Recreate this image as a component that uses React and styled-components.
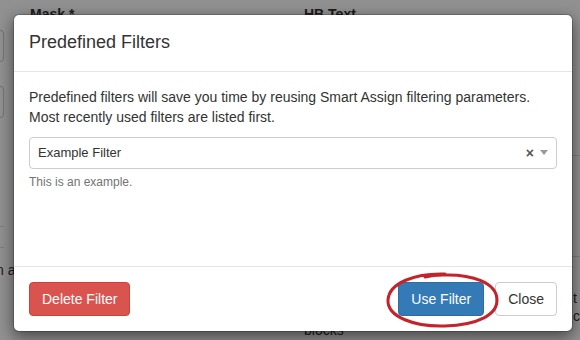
import React from 'react'
import styled, {createGlobalStyle} from 'styled-components'

const GlobalStyle = createGlobalStyle`
html, body {
    margin: 0;
    padding: 0;
    width: 580px;
    height: 340px;
    overflow: hidden;
    background: #fff;
    font-family: "Liberation Sans", Arial, sans-serif;
    font-size: 14px;
    color: #333;
}
*{
    box-sizing: border-box;
}
`

function App() {
  return (
    <Screen>
        <GlobalStyle />
        <Page>
            <EdgeCol>
                <EdgeInput top={30} />
                <EdgeInput top={24} />
                <EdgeRule top={108} />
                <EdgeRule top={20} />
                <EdgeText>n a</EdgeText>
            </EdgeCol>
            <FormCol>
                <Label>Mask *</Label>
            </FormCol>
            <FormCol>
                <Label>HB Text</Label>
                <Spacer />
                <Label plain>blocks</Label>
            </FormCol>
            <RightCol>
                <EdgeRule top={155} />
                <EdgeRule top={100} />
                <RightText top={32}>t</RightText>
                <RightText top={0}>c</RightText>
            </RightCol>
        </Page>
        <Backdrop />
        <Modal>
            <Header>
                <Title>Predefined Filters</Title>
            </Header>
            <Body>
                <Intro>
                    Predefined filters will save you time by reusing Smart Assign filtering parameters.
                    <br />Most recently used filters are listed first.
                </Intro>
                <Select>
                    <SelectValue>Example Filter</SelectValue>
                    <ClearMark>×</ClearMark>
                    <Caret />
                </Select>
                <Help>This is an example.</Help>
            </Body>
            <Footer>
                <Button kind="danger">Delete Filter</Button>
                <FooterRight>
                    <Circled>
                        <Button kind="primary">Use Filter</Button>
                        <Ring viewBox="0 0 116 58" width="116" height="58">
                            <path d="M60 3 C 30 2, 4 12, 3 29 C 2 46, 30 56, 60 55 C 92 54, 113 44, 112 28 C 111 12, 88 3, 58 4 C 50 4, 44 5, 40 6"
                                fill="none" stroke="#c4232b" strokeWidth="3" strokeLinecap="round" />
                        </Ring>
                    </Circled>
                    <Button>Close</Button>
                </FooterRight>
            </Footer>
        </Modal>
    </Screen>
  )
}
export default App

const Screen = styled.div`
position: relative;
width: 580px;
height: 340px;
overflow: hidden;
`
const Page = styled.div`
display: grid;
grid-template-columns: 4px 274px 250px 52px;
height: 340px;
`
const EdgeCol = styled.div`
display: flex;
flex-direction: column;
`
const EdgeInput = styled.div`
margin-top: ${props => props.top}px;
height: 32px;
border: 1px solid #ccc;
border-left: none;
border-radius: 0 4px 4px 0;
`
const EdgeRule = styled.div`
margin-top: ${props => props.top}px;
border-top: 1px solid #ddd;
`
const EdgeText = styled.div`
margin-top: 14px;
margin-left: -4px;
white-space: nowrap;
font-size: 14px;
`
const FormCol = styled.div`
display: flex;
flex-direction: column;
padding: 4px 0 0 26px;
`
const Label = styled.div`
font-weight: ${props => props.plain ? 400 : 700};
font-size: 14px;
line-height: 20px;
`
const Spacer = styled.div`
flex: 1;
`
const RightCol = styled.div`
display: flex;
flex-direction: column;
`
const RightText = styled.div`
margin-top: ${props => props.top}px;
padding-left: 45px;
font-size: 14px;
line-height: 18px;
`
const Backdrop = styled.div`
position: absolute;
inset: 0;
background: rgba(0, 0, 0, 0.43);
`
const Modal = styled.div`
position: absolute;
top: 14px;
left: 13px;
width: 560px;
display: flex;
flex-direction: column;
background: #fff;
border: 1px solid rgba(0, 0, 0, .2);
border-radius: 6px;
box-shadow: 0 5px 15px rgba(0, 0, 0, .5);
background-clip: padding-box;
`
const Header = styled.div`
padding: 15px;
border-bottom: 1px solid #e5e5e5;
`
const Title = styled.h4`
margin: 0;
font-size: 18px;
font-weight: 500;
line-height: 1.42857;
color: #333;
`
const Body = styled.div`
padding: 15px;
min-height: 194px;
`
const Intro = styled.p`
margin: 0 0 10px;
line-height: 20px;
`
const Select = styled.div`
display: flex;
align-items: center;
height: 32px;
padding: 0 8px;
border: 1px solid #ccc;
border-radius: 4px;
`
const SelectValue = styled.span`
flex: 1;
font-size: 13px;
color: #333;
`
const ClearMark = styled.span`
font-size: 14px;
font-weight: 700;
color: #555;
margin-right: 6px;
line-height: 1;
`
const Caret = styled.span`
width: 0;
height: 0;
border-left: 4px solid transparent;
border-right: 4px solid transparent;
border-top: 5px solid #999;
`
const Help = styled.div`
margin-top: 5px;
font-size: 12px;
color: #737373;
line-height: 17px;
`
const Footer = styled.div`
display: flex;
align-items: center;
justify-content: space-between;
padding: 15px;
border-top: 1px solid #e5e5e5;
`
const FooterRight = styled.div`
display: flex;
align-items: center;
gap: 11px;
`
const Circled = styled.div`
position: relative;
display: flex;
`
const Ring = styled.svg`
position: absolute;
left: -13px;
top: -11px;
pointer-events: none;
`
const palette = {
    danger: {bg: '#d9534f', border: '#d43f3a', color: '#fff'},
    primary: {bg: '#337ab7', border: '#2e6da4', color: '#fff'},
    default: {bg: '#fff', border: '#ccc', color: '#333'},
}
const Button = styled.button`
font-family: "Liberation Sans", Arial, sans-serif;
font-size: 14px;
line-height: 20px;
padding: 6px 12px;
border-radius: 4px;
border: 1px solid ${props => palette[props.kind || 'default'].border};
background: ${props => palette[props.kind || 'default'].bg};
color: ${props => palette[props.kind || 'default'].color};
cursor: pointer;
`
